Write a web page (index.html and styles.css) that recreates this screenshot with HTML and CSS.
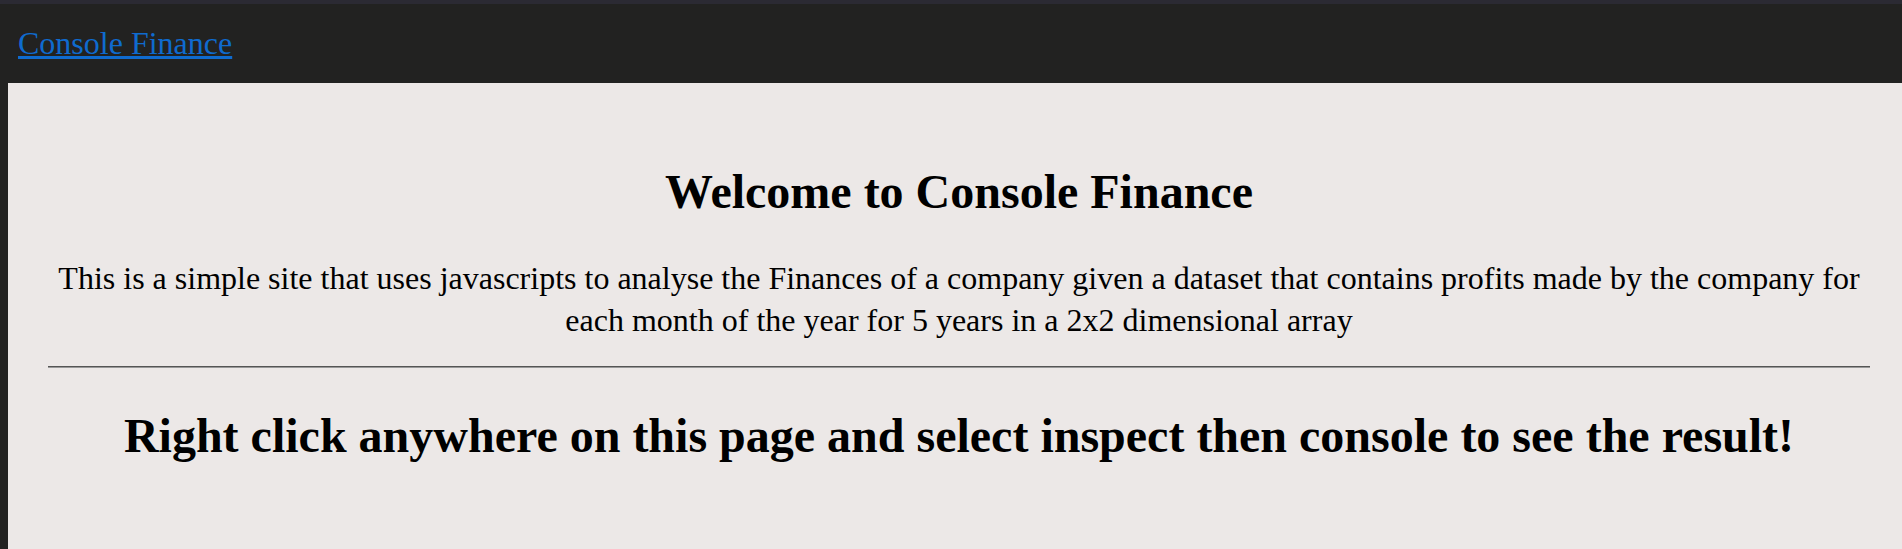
FILE: index.html
```html
<!DOCTYPE html>
<html lang="en">
<head>
<meta charset="utf-8">
<title>Console Finance</title>
<link rel="stylesheet" href="styles.css">
</head>
<body>
<div class="topbar"></div>
<header class="nav">
  <a class="brand" href="#">Console Finance</a>
</header>
<main class="content">
  <h1 class="title">Welcome to Console Finance</h1>
  <p class="intro">This is a simple site that uses javascripts to analyse the Finances of a company given a dataset that contains profits made by the company for each month of the year for 5 years in a 2x2 dimensional array</p>
  <hr class="divider">
  <h2 class="cta">Right click anywhere on this page and select inspect then console to see the result!</h2>
</main>
</body>
</html>
```
FILE: styles.css
```css
html, body {
  margin: 0;
  padding: 0;
  overflow: hidden;
}
body {
  background: #222221;
  font-family: "Liberation Serif", "Times New Roman", serif;
  color: #000;
}
.topbar {
  height: 4px;
  background: #2b2a33;
}
.nav {
  height: 79px;
  box-sizing: border-box;
  padding: 21px 0 0 18px;
}
.brand {
  font-size: 32px;
  line-height: 37px;
  color: #0f6bcf;
  text-decoration: underline;
}
.content {
  margin-left: 8px;
  width: 1902px;
  min-height: 470px;
  box-sizing: border-box;
  padding: 81px 40px 0;
  background: #ece8e7;
  text-align: center;
}
.title {
  margin: 0;
  font-size: 48px;
  line-height: 55px;
  font-weight: bold;
}
.intro {
  margin: 38px 0 0;
  font-size: 32px;
  line-height: 42px;
}
.divider {
  margin: 25px 0 0;
  border: 0;
  border-top: 1px solid #555;
  border-bottom: 1px solid #999;
  height: 0;
}
.cta {
  margin: 40px 0 0;
  font-size: 48px;
  line-height: 55px;
  font-weight: bold;
}
```
